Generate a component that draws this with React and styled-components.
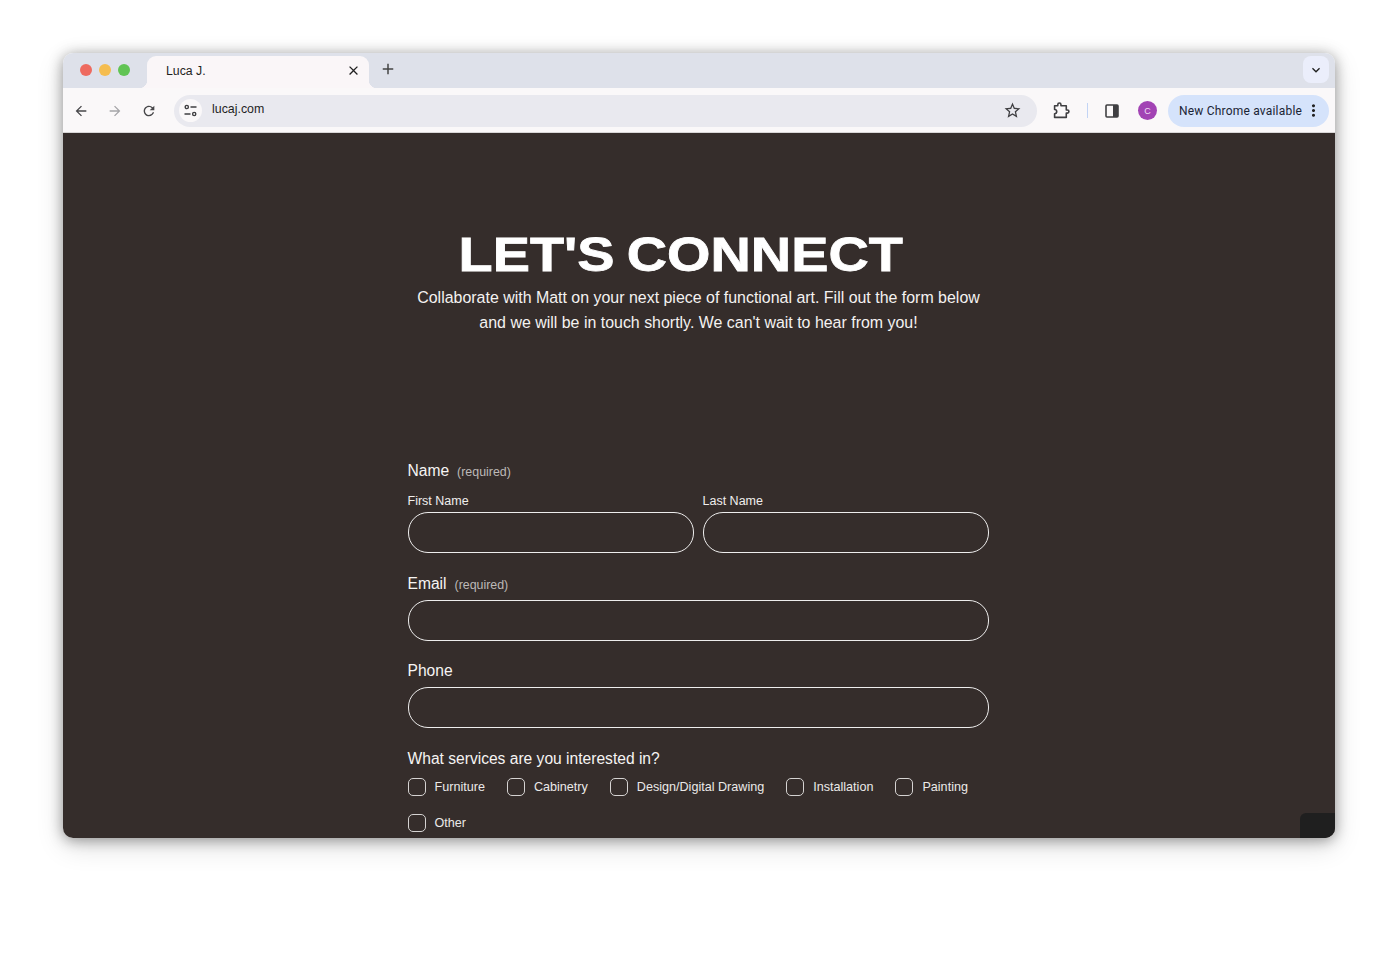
import styled, { createGlobalStyle } from "styled-components";
import {
  MdArrowBack,
  MdArrowForward,
  MdRefresh,
  MdClose,
  MdAdd,
  MdKeyboardArrowDown,
  MdStarBorder,
  MdMoreVert,
} from "react-icons/md";

const GlobalStyle = createGlobalStyle`
  * { box-sizing: border-box; }
  html, body { margin: 0; background: #fff; }
  body { font-family: "Liberation Sans", Arial, sans-serif; overflow: hidden; }
`;

const Page = styled.div`
  height: 961px;
  padding: 53px 62px 0 63px;
`;

const Window = styled.div`
  position: relative;
  height: 785px;
  border-radius: 10px;
  overflow: hidden;
  box-shadow: 0 2px 14px rgba(0, 0, 0, 0.38), 0 8px 28px rgba(0, 0, 0, 0.14);
`;

const TabStrip = styled.div`
  height: 35px;
  background: #dee1ea;
  display: flex;
  align-items: flex-start;
  padding: 3px 6px 0 17px;
`;

const Lights = styled.div`
  display: flex;
  gap: 7px;
  margin: 8px 17px 0 0;
`;

const Light = styled.span`
  width: 12px;
  height: 12px;
  border-radius: 50%;
  background: ${p => p.$color};
`;

const Tab = styled.div`
  position: relative;
  width: 222px;
  height: 32px;
  background: #faf6f8;
  border-radius: 9px 9px 0 0;
  display: flex;
  align-items: center;
  justify-content: space-between;
  padding: 0 8px 3px 19px;
  font-size: 12.3px;
  color: #1f1f1f;
  svg { font-size: 15px; color: #222; }
  &:after {
    content: "";
    position: absolute;
    right: -8px;
    bottom: 0;
    width: 8px;
    height: 8px;
    background: radial-gradient(circle at 100% 0, transparent 8px, #faf6f8 8.5px);
  }
  &:before {
    content: "";
    position: absolute;
    left: -8px;
    bottom: 0;
    width: 8px;
    height: 8px;
    background: radial-gradient(circle at 0 0, transparent 8px, #faf6f8 8.5px);
  }
`;

const NewTab = styled.div`
  display: flex;
  margin: 4px 0 0 10px;
  color: #444;
  font-size: 18px;
`;

const TabMenu = styled.div`
  margin-left: auto;
  width: 26px;
  height: 27px;
  border-radius: 8px;
  background: #ebeefb;
  display: flex;
  align-items: center;
  justify-content: center;
  color: #222;
  font-size: 16px;
`;

const Toolbar = styled.div`
  height: 45px;
  background: #faf8f9;
  display: flex;
  align-items: center;
  padding: 1px 6px 0 10px;
  border-bottom: 1px solid #d8d6d6;
`;

const NavButton = styled.div`
  width: 16px;
  display: flex;
  justify-content: center;
  margin-right: ${p => p.$gap}px;
  font-size: 18px;
  color: ${p => (p.$muted ? "#a5a5a8" : "#47474a")};
`;

const Omnibox = styled.div`
  width: 863px;
  height: 32px;
  border-radius: 16px;
  background: #e9e9ef;
  display: flex;
  align-items: center;
  padding: 0 15px 0 5px;
  font-size: 12.4px;
  color: #1f1f1f;
  margin-left: 17px;
`;

const SiteBadge = styled.div`
  width: 23px;
  height: 23px;
  border-radius: 50%;
  background: #faf8f9;
  display: flex;
  align-items: center;
  justify-content: center;
  margin-right: 10px;
`;

const Url = styled.span`
  flex: 1;
  margin-bottom: 4px;
`;

const ToolIcon = styled.div`
  display: flex;
  color: #3f3f42;
  font-size: ${p => p.$size || 19}px;
  margin-left: ${p => p.$left}px;
`;

const Divider = styled.span`
  width: 1px;
  height: 15px;
  background: #c2d4f5;
  margin-left: 17px;
`;

const Avatar = styled.div`
  width: 19px;
  height: 19px;
  border-radius: 50%;
  background: #a243b4;
  color: #f1dff4;
  font-size: 9px;
  display: flex;
  align-items: center;
  justify-content: center;
  margin-left: 19px;
`;

const UpdateChip = styled.div`
  width: 161px;
  height: 32px;
  border-radius: 16px;
  background: #d5e3fb;
  margin-left: 11px;
  display: flex;
  align-items: center;
  justify-content: space-between;
  padding: 0 6px 0 11px;
  font-family: Roboto, "Liberation Sans", sans-serif;
  font-size: 12px;
  font-weight: 400;
  letter-spacing: 0.2px;
  color: #1a2434;
  white-space: nowrap;
  svg { font-size: 19px; color: #222; }
`;

const Content = styled.main`
  height: 705px;
  background: #352d2b;
  color: #fff;
  padding-top: 93px;
`;

const Title = styled.h1`
  margin: 0;
  padding-right: 32px;
  text-align: center;
  font-size: 49px;
  line-height: 56px;
  font-weight: 700;
  word-spacing: -3px;
  -webkit-text-stroke: 0.8px #fff;
  transform: scaleX(1.14);
`;

const Intro = styled.p`
  margin: 3px 0 0;
  padding-right: 1px;
  text-align: center;
  font-size: 15.95px;
  line-height: 25px;
  color: #f4f2f1;
`;

const Form = styled.form`
  width: 581px;
  margin: 126px 0 0 344.5px;
`;

const GroupLabel = styled.div`
  font-size: 15.6px;
  line-height: 20px;
  margin-top: ${p => p.$top || 0}px;
  color: #f6f4f3;
`;

const Required = styled.span`
  font-size: 12.4px;
  color: #bdb9b7;
  margin-left: 8px;
`;

const NameRow = styled.div`
  display: grid;
  grid-template-columns: 286px 286px;
  gap: 9px;
  margin-top: 12px;
`;

const SubLabel = styled.label`
  display: block;
  font-size: 12.5px;
  line-height: 14px;
  margin-bottom: 4px;
  color: #f0eeed;
`;

const Input = styled.input`
  display: block;
  width: 100%;
  height: ${p => p.$height || 41}px;
  margin-top: ${p => p.$top || 0}px;
  border: 1px solid #eeeded;
  border-radius: 20px;
  background: transparent;
  outline: none;
`;

const Options = styled.div`
  display: flex;
  flex-wrap: wrap;
  gap: 18px 22px;
  margin-top: 9px;
`;

const Option = styled.label`
  display: flex;
  align-items: center;
  gap: 9px;
  font-size: 12.6px;
  color: #ebe9e8;
`;

const Box = styled.span`
  width: 18px;
  height: 18px;
  border: 1px solid #d5d3d2;
  border-radius: 5px;
`;

const Corner = styled.div`
  position: absolute;
  right: 0;
  bottom: 0;
  width: 35px;
  height: 25px;
  background: #1f1f1f;
  border-top-left-radius: 6px;
`;

const services = ["Furniture", "Cabinetry", "Design/Digital Drawing", "Installation", "Painting", "Other"];

const App = () => {
  return (
    <Page>
      <GlobalStyle />
      <Window>
        <TabStrip>
          <Lights>
            <Light $color="#ee6a5f" />
            <Light $color="#f5bd4f" />
            <Light $color="#61c454" />
          </Lights>
          <Tab>
            Luca J.
            <MdClose />
          </Tab>
          <NewTab>
            <MdAdd />
          </NewTab>
          <TabMenu>
            <MdKeyboardArrowDown />
          </TabMenu>
        </TabStrip>
        <Toolbar>
          <NavButton $gap={18}>
            <MdArrowBack />
          </NavButton>
          <NavButton $gap={18} $muted>
            <MdArrowForward />
          </NavButton>
          <NavButton $gap={0}>
            <MdRefresh />
          </NavButton>
          <Omnibox>
            <SiteBadge>
              <svg width="13" height="13" viewBox="0 0 13 13" fill="none" stroke="#3f3f42" strokeWidth="1.4">
                <circle cx="2.8" cy="3" r="1.6" />
                <path d="M6.5 3h6M0.5 10h6" />
                <circle cx="10.2" cy="10" r="1.6" />
              </svg>
            </SiteBadge>
            <Url>lucaj.com</Url>
            <ToolIcon>
              <MdStarBorder />
            </ToolIcon>
          </Omnibox>
          <ToolIcon $left={16}>
            <svg width="17" height="17" viewBox="0 0 16 16" fill="none" stroke="#3f3f42" strokeWidth="1.5" strokeLinejoin="round">
              <path d="M1.5 3.5H4.5V2.5a1.5 1.5 0 0 1 3 0V3.5H12.5V7.5H13.5a1.5 1.5 0 0 1 0 3H12.5V14.5H1.5V11a2 2 0 0 0 0-4Z" />
            </svg>
          </ToolIcon>
          <Divider />
          <ToolIcon $left={17} $size={14}>
            <svg width="14" height="14" viewBox="0 0 14 14">
              <rect x="1" y="1" width="12" height="12" rx="1" fill="none" stroke="#3f3f42" strokeWidth="1.6" />
              <rect x="8" y="1" width="5" height="12" fill="#3f3f42" />
            </svg>
          </ToolIcon>
          <Avatar>C</Avatar>
          <UpdateChip>
            New Chrome available
            <MdMoreVert />
          </UpdateChip>
        </Toolbar>
        <Content>
          <Title>LET'S CONNECT</Title>
          <Intro>
            Collaborate with Matt on your next piece of functional art. Fill out the form below
            <br />
            and we will be in touch shortly. We can't wait to hear from you!
          </Intro>
          <Form>
            <GroupLabel>
              Name<Required>(required)</Required>
            </GroupLabel>
            <NameRow>
              <div>
                <SubLabel>First Name</SubLabel>
                <Input />
              </div>
              <div>
                <SubLabel>Last Name</SubLabel>
                <Input />
              </div>
            </NameRow>
            <GroupLabel $top={21}>
              Email<Required>(required)</Required>
            </GroupLabel>
            <Input $top={5} $height={40.5} />
            <GroupLabel $top={20.5}>Phone</GroupLabel>
            <Input $top={6} $height={40.5} />
            <GroupLabel $top={21}>What services are you interested in?</GroupLabel>
            <Options>
              {services.map(name => (
                <Option key={name}>
                  <Box />
                  {name}
                </Option>
              ))}
            </Options>
          </Form>
        </Content>
        <Corner />
      </Window>
    </Page>
  );
};

export default App;
